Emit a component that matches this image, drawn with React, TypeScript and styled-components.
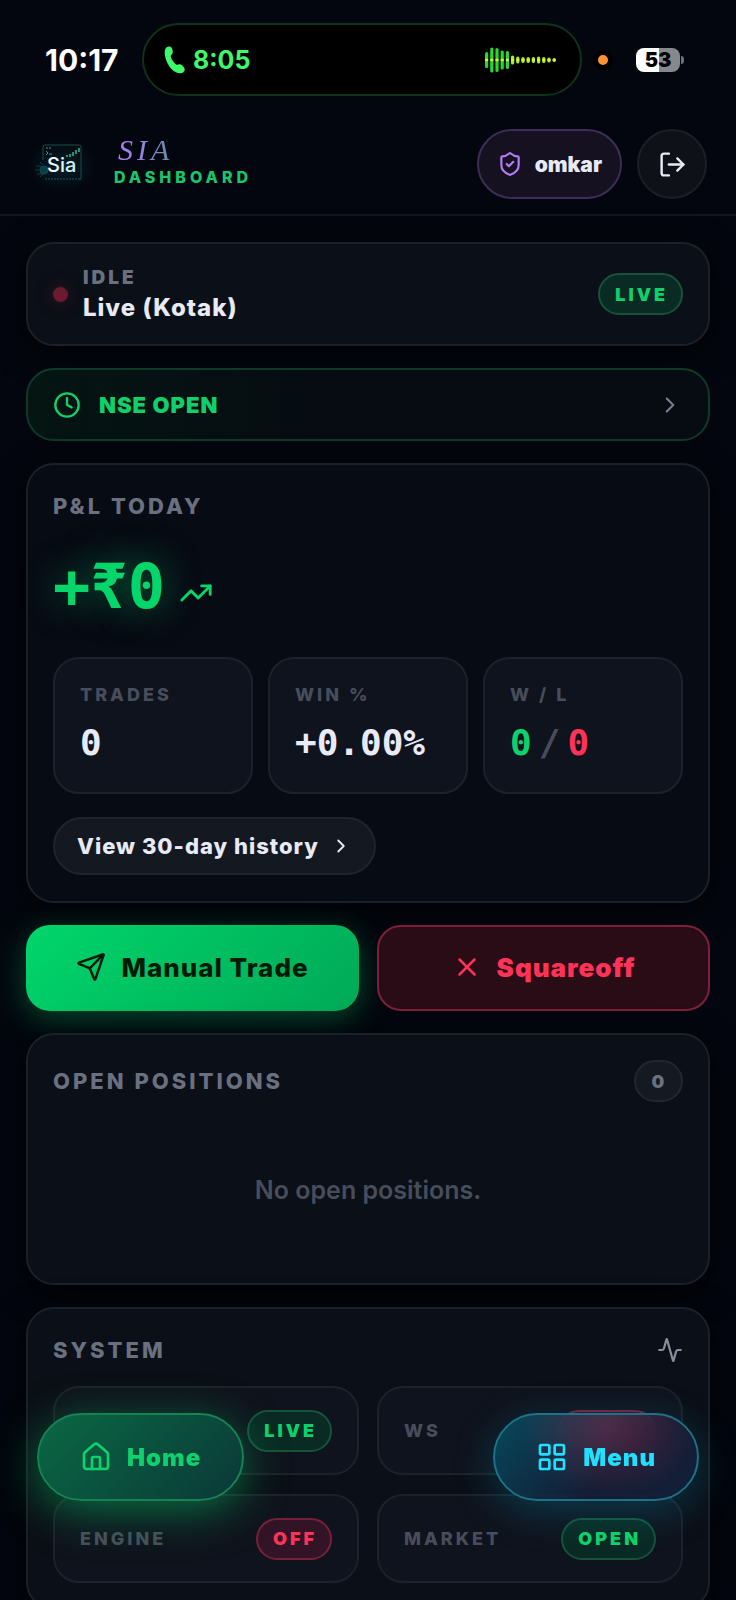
import React from "react";
import styled, { createGlobalStyle, css } from "styled-components";
import {
  Activity,
  ChevronRight,
  Clock,
  House,
  LayoutGrid,
  LogOut,
  Send,
  ShieldCheck,
  TrendingUp,
  X,
} from "lucide-react";

const color = {
  green: "#0fd16b",
  red: "#ff3358",
  cyan: "#1fe0ff",
  text: "#e8ebf7",
  label: "#6a7080",
  faint: "#474d5b",
  line: "#1c2029",
};

const GlobalStyle = createGlobalStyle`
  * { box-sizing: border-box; }
  html, body, #root { height: 100%; }
  body {
    margin: 0;
    background: #03060e;
    color: ${color.text};
    font-family: Inter, "Liberation Sans", sans-serif;
    overflow: hidden;
  }
  button { font: inherit; color: inherit; cursor: pointer; margin: 0; }
  h2, p { margin: 0; }
  svg { flex: none; display: block; }
`;

const Screen = styled.div`
  height: 100vh;
  overflow-y: auto;
  scrollbar-width: none;
`;

const StatusBar = styled.div`
  height: 113px;
  padding: 23px 56px 17px 45px;
  display: flex;
  align-items: center;
`;

const Time = styled.time`
  width: 97px;
  font-size: 30px;
  font-weight: 700;
  line-height: 32px;
  color: #fff;
`;

const Island = styled.div`
  flex: 1;
  height: 73px;
  padding: 0 22px 0 20px;
  display: flex;
  align-items: center;
  justify-content: space-between;
  border: 2px solid #0e3319;
  border-radius: 37px;
  background: #000;
`;

const Call = styled.div`
  display: flex;
  align-items: center;
  gap: 8px;
  color: #3dfa6b;
  font-size: 25px;
  font-weight: 700;
  line-height: 32px;
`;

const RecordingDot = styled.span`
  width: 20px;
  height: 20px;
  margin: 0 23px 0 11px;
  border: 5px solid #000;
  border-radius: 50%;
  background: #ff9333;
`;

const Battery = styled.div`
  position: relative;
  width: 44px;
  height: 24px;
  border-radius: 8px;
  background: linear-gradient(90deg, #fff 53%, #86888d 53%);
  color: #000;
  font-size: 20px;
  font-weight: 900;
  line-height: 24px;
  text-align: center;
  &::after {
    content: "";
    position: absolute;
    left: 45px;
    top: 8px;
    width: 3px;
    height: 8px;
    border-radius: 0 4px 4px 0;
    background: #6f7176;
  }
`;

const Header = styled.header`
  display: flex;
  align-items: center;
  justify-content: space-between;
  padding: 16px 29px 15px 26px;
  border-bottom: 2px solid #11151d;
`;

const Brand = styled.div`
  display: flex;
  align-items: center;
  gap: 18px;
`;

const BrandName = styled.div`
  display: flex;
  flex-direction: column;
  align-items: flex-start;
  padding-bottom: 8px;
`;

const Script = styled.span`
  padding: 0 4px;
  font-family: "Liberation Serif", serif;
  font-style: italic;
  font-size: 30px;
  line-height: 34px;
  letter-spacing: 4px;
  background: linear-gradient(90deg, #b57cf5, #8c86d8 50%, #5d8da0);
  background-clip: text;
  color: transparent;
`;

const Section = styled.span`
  color: #17c76e;
  font-size: 16px;
  font-weight: 800;
  line-height: 20px;
  letter-spacing: 4px;
`;

const HeaderActions = styled.div`
  display: flex;
  gap: 15px;
`;

const UserButton = styled.button`
  height: 70px;
  padding: 0 18px;
  display: flex;
  align-items: center;
  gap: 12px;
  border: 2px solid #3e2d58;
  border-radius: 35px;
  background: #151120;
  font-size: 21px;
  font-weight: 900;
  svg { color: #b57cf5; }
`;

const RoundButton = styled.button`
  width: 70px;
  height: 70px;
  padding: 0;
  display: grid;
  place-items: center;
  border: 2px solid #1b1f27;
  border-radius: 50%;
  background: #0e1118;
`;

const Main = styled.main`
  display: flex;
  flex-direction: column;
  gap: 22px;
  padding: 26px;
`;

const Card = styled.section<{ $deep?: boolean }>`
  padding: 25px;
  border: 2px solid ${color.line};
  border-radius: 28px;
  background: ${(p) => (p.$deep ? "#070b14" : "#0b0f17")};
  box-shadow: 0 8px 32px #000000a0;
`;

const ProfitCard = styled(Card)`
  padding-bottom: 26px;
`;

const ModeCard = styled(Card)`
  display: flex;
  align-items: center;
  gap: 15px;
  padding: 20px 25px;
`;

const Dot = styled.span`
  width: 15px;
  height: 15px;
  border-radius: 50%;
  background: #6b1a2f;
  box-shadow: 0 0 16px #6b1a2f80;
`;

const ModeText = styled.div`
  flex: 1;
`;

const ModeState = styled.p`
  color: ${color.label};
  font-size: 19px;
  font-weight: 900;
  line-height: 28px;
  letter-spacing: 3px;
`;

const ModeName = styled.p`
  font-size: 24px;
  font-weight: 800;
  line-height: 32px;
  letter-spacing: 1px;
`;

type Tone = "green" | "red" | "neutral";

const tones = {
  green: css`
    color: ${color.green};
    border-color: #16533a;
    background: #0a2a24;
  `,
  red: css`
    color: ${color.red};
    border-color: #77203a;
    background: #331426;
  `,
  neutral: css`
    color: ${color.label};
    border-color: #22262f;
    background: #151a22;
  `,
};

const Badge = styled.span<{ $tone: Tone }>`
  height: 42px;
  min-width: 49px;
  padding: 0 13px 0 15px;
  display: inline-flex;
  align-items: center;
  justify-content: center;
  border: 2px solid;
  border-radius: 21px;
  font-size: 18px;
  font-weight: 900;
  letter-spacing: 3px;
  ${(p) => tones[p.$tone]}
`;

const EmptyBadge = styled(Badge)`
  width: 98px;
`;

const MarketButton = styled.button`
  height: 73px;
  padding: 0 25px;
  display: flex;
  align-items: center;
  gap: 18px;
  border: 2px solid #0f3a2a;
  border-radius: 28px;
  background: linear-gradient(90deg, #041512, #070b12 50%);
  color: ${color.green};
  font-size: 22px;
  font-weight: 900;
  letter-spacing: 1px;
  svg:last-child { margin-left: auto; color: #777c8a; }
`;

const CardTitle = styled.h2`
  color: ${color.label};
  font-size: 22px;
  font-weight: 800;
  line-height: 32px;
  letter-spacing: 3px;
`;

const CardHead = styled.div`
  display: flex;
  align-items: center;
  justify-content: space-between;
  margin-bottom: 20px;
  color: #8a8f9d;
`;

const mono = css`
  font-family: "DejaVu Sans Mono", monospace;
  font-weight: 700;
`;

const Profit = styled.div`
  display: flex;
  align-items: center;
  gap: 14px;
  margin: 25px 0 30px;
  color: #04d66b;
  svg { margin-top: 12px; }
`;

const ProfitValue = styled.span`
  ${mono}
  font-size: 62px;
  line-height: 80px;
  text-shadow: 0 0 36px #00d66b80;
`;

const Stats = styled.div`
  display: grid;
  grid-template-columns: repeat(3, 1fr);
  gap: 15px;
  margin-bottom: 23px;
`;

const Tile = styled.div`
  border: 2px solid #1d212b;
  border-radius: 26px;
  background: #0f131d;
`;

const Stat = styled(Tile)`
  padding: 24px 25px 25px;
`;

const TileLabel = styled.span`
  color: ${color.faint};
  font-size: 18px;
  font-weight: 800;
  line-height: 24px;
  letter-spacing: 3px;
`;

const StatValue = styled.div`
  ${mono}
  margin-top: 12px;
  display: flex;
  gap: 7px;
  font-size: 36px;
  line-height: 48px;
`;

const Tint = styled.span<{ $color: string }>`
  color: ${(p) => p.$color};
`;

const HistoryButton = styled.button`
  height: 58px;
  padding: 0 22px;
  display: flex;
  align-items: center;
  gap: 11px;
  border: 2px solid #20242d;
  border-radius: 29px;
  background: #141821;
  font-size: 22px;
  font-weight: 800;
  letter-spacing: 1px;
`;

const Actions = styled.div`
  display: grid;
  grid-template-columns: 1fr 1fr;
  gap: 18px;
`;

const ActionButton = styled.button<{ $primary?: boolean }>`
  height: 86px;
  padding: 0 20px 2px;
  display: flex;
  align-items: center;
  justify-content: center;
  gap: 15px;
  border-radius: 24px;
  font-size: 26px;
  font-weight: 800;
  letter-spacing: 1px;
  ${(p) =>
    p.$primary
      ? css`
          border: 0;
          color: #031a08;
          background: linear-gradient(135deg, #00d66b, #00a957);
          box-shadow: 0 8px 32px #00c86459;
        `
      : css`
          border: 2px solid #7d2039;
          color: ${color.red};
          background: #2a0c17;
          font-weight: 900;
        `}
`;

const Empty = styled.p`
  padding: 52px 0;
  color: ${color.faint};
  font-size: 25px;
  font-weight: 600;
  line-height: 32px;
  text-align: center;
`;

const SystemGrid = styled.div`
  display: grid;
  grid-template-columns: 1fr 1fr;
  gap: 19px 18px;
`;

const SystemItem = styled(Tile)`
  height: 89px;
  padding: 0 25px;
  display: flex;
  align-items: center;
  justify-content: space-between;
`;

const FloatingNav = styled.nav`
  position: fixed;
  left: 37px;
  right: 37px;
  bottom: 99px;
  display: flex;
  justify-content: space-between;
`;

const NavButton = styled.button<{ $home?: boolean }>`
  height: 88px;
  padding: 0 41px;
  display: flex;
  align-items: center;
  gap: 15px;
  border: 2px solid;
  border-radius: 44px;
  font-size: 24px;
  font-weight: 900;
  letter-spacing: 1px;
  backdrop-filter: blur(16px);
  ${(p) =>
    p.$home
      ? css`
          color: ${color.green};
          border-color: #178254;
          background: linear-gradient(135deg, #0a6c45f5, #0b3b39f5);
          box-shadow: 0 10px 44px #00c86480;
        `
      : css`
          color: ${color.cyan};
          border-color: #1f7185;
          background:
            radial-gradient(ellipse 90px 70px at 56% 15%, #ff335838, #ff335800),
            linear-gradient(135deg, #04566ccc, #162341b3 60%, #162341cc);
          box-shadow: 0 10px 40px #00b4dc40;
        `}
`;

const PhoneGlyph = () => (
  <svg width="21" height="28" viewBox="0 0 21 28" fill="currentColor" aria-hidden="true">
    <path d="M1.2 3.2C2 1.2 4.300 0 6.400.700C8.300 1.400 9.200 5.500 8.600 7.300C8.200 8.600 6.400 9.200 6.700 10.600C7.300 13.300 10.100 17 12.100 18.500C13.300 19.400 14.600 18 16 18.200C17.900 18.500 20.600 21.300 20.700 23.200C20.800 25.600 18.400 27.400 15.800 27.300C10.400 27 5.900 22.400 3.300 16.800C1.200 12.200 0 6.600 1.200 3.200Z" />
  </svg>
);

const waveHeights = [16, 25, 24, 19, 18, 9, 7, 6, 6, 6, 7, 6, 5, 4];

const Waveform = () => (
  <svg width="74" height="28" viewBox="0 0 74 28" aria-hidden="true">
    {waveHeights.map((h, i) => (
      <g key={i}>
        <rect x={1 + i * 5.2} y={14 - h / 2} width="3.2" height={h} rx="1.6" fill={i < 5 ? "#27d82f" : "#a5e82e"} />
        <rect x={1 + i * 5.2} y="12.700" width="3.2" height="2.600" rx="1" fill="#d8f52f" />
      </g>
    ))}
  </svg>
);

const SiaLogo = () => (
  <svg width="70" height="56" viewBox="0 0 70 56" role="img" aria-label="Sia">
    <defs>
      <radialGradient id="logoGlow">
        <stop offset="0" stopColor="#07303a" stopOpacity=".6" />
        <stop offset="1" stopColor="#07303a" stopOpacity="0" />
      </radialGradient>
      <linearGradient id="logoText" x1="0" y1="0" x2="1" y2="0">
        <stop offset="0" stopColor="#ffffff" />
        <stop offset="1" stopColor="#c2eef5" />
      </linearGradient>
    </defs>
    <ellipse cx="36" cy="30" rx="34" ry="27" fill="url(#logoGlow)" />
    <path d="M17 24V11q0-2 2-2H53q2 0 2 2V42q0 2-2 2" fill="none" stroke="#1c4a49" strokeWidth="1" />
    <path d="M20 12h2M23 12h2M20 15l2 2-2 2M23 18h3" fill="none" stroke="#4d9480" strokeWidth="1" />
    <path d="M41 21v-2M44 21v-3M47 20v-4M50 18v-4M53 16v-4" stroke="#2fbd9a" strokeWidth="1.500" />
    <circle cx="18" cy="34" r="4" fill="#0b3d45" stroke="#124850" />
    <path d="M10 30h5M9 34h5M11 38h5M14 26l3 3M14 41l3-3" stroke="#103d43" strokeWidth="1" />
    <text x="21" y="36" fontFamily="Inter, sans-serif" fontSize="20" fontWeight="500" fill="url(#logoText)">Sia</text>
    <path d="M19 43H54" stroke="#143e43" strokeWidth="1.500" strokeDasharray="2 1" />
  </svg>
);

export default function App() {
  return (
    <>
      <GlobalStyle />
      <Screen>
        <StatusBar>
          <Time>10:17</Time>
          <Island>
            <Call>
              <PhoneGlyph />
              8:05
            </Call>
            <Waveform />
          </Island>
          <RecordingDot />
          <Battery>53</Battery>
        </StatusBar>

        <Header>
          <Brand>
            <SiaLogo />
            <BrandName>
              <Script>SIA</Script>
              <Section>DASHBOARD</Section>
            </BrandName>
          </Brand>
          <HeaderActions>
            <UserButton type="button">
              <ShieldCheck size={26} />
              omkar
            </UserButton>
            <RoundButton type="button" aria-label="Log out">
              <LogOut size={29} />
            </RoundButton>
          </HeaderActions>
        </Header>

        <Main>
          <ModeCard>
            <Dot />
            <ModeText>
              <ModeState>IDLE</ModeState>
              <ModeName>Live (Kotak)</ModeName>
            </ModeText>
            <Badge $tone="green">LIVE</Badge>
          </ModeCard>

          <MarketButton type="button">
            <Clock size={28} />
            NSE OPEN
            <ChevronRight size={26} />
          </MarketButton>

          <ProfitCard $deep>
            <CardTitle>P&amp;L TODAY</CardTitle>
            <Profit>
              <ProfitValue>+₹0</ProfitValue>
              <TrendingUp size={34} />
            </Profit>
            <Stats>
              <Stat>
                <TileLabel>TRADES</TileLabel>
                <StatValue>0</StatValue>
              </Stat>
              <Stat>
                <TileLabel>WIN %</TileLabel>
                <StatValue>+0.00%</StatValue>
              </Stat>
              <Stat>
                <TileLabel>W / L</TileLabel>
                <StatValue>
                  <Tint $color={color.green}>0</Tint>
                  <Tint $color={color.faint}>/</Tint>
                  <Tint $color={color.red}>0</Tint>
                </StatValue>
              </Stat>
            </Stats>
            <HistoryButton type="button">
              View 30-day history
              <ChevronRight size={22} />
            </HistoryButton>
          </ProfitCard>

          <Actions>
            <ActionButton type="button" $primary>
              <Send size={30} />
              Manual Trade
            </ActionButton>
            <ActionButton type="button">
              <X size={30} />
              Squareoff
            </ActionButton>
          </Actions>

          <Card>
            <CardHead>
              <CardTitle>OPEN POSITIONS</CardTitle>
              <Badge $tone="neutral">0</Badge>
            </CardHead>
            <Empty>No open positions.</Empty>
          </Card>

          <Card>
            <CardHead>
              <CardTitle>SYSTEM</CardTitle>
              <Activity size={26} />
            </CardHead>
            <SystemGrid>
              <SystemItem>
                <TileLabel />
                <Badge $tone="green">LIVE</Badge>
              </SystemItem>
              <SystemItem>
                <TileLabel>WS</TileLabel>
                <EmptyBadge $tone="red" />
              </SystemItem>
              <SystemItem>
                <TileLabel>ENGINE</TileLabel>
                <Badge $tone="red">OFF</Badge>
              </SystemItem>
              <SystemItem>
                <TileLabel>MARKET</TileLabel>
                <Badge $tone="green">OPEN</Badge>
              </SystemItem>
            </SystemGrid>
          </Card>
        </Main>
      </Screen>

      <FloatingNav>
        <NavButton type="button" $home>
          <House size={32} />
          Home
        </NavButton>
        <NavButton type="button">
          <LayoutGrid size={32} />
          Menu
        </NavButton>
      </FloatingNav>
    </>
  );
}
